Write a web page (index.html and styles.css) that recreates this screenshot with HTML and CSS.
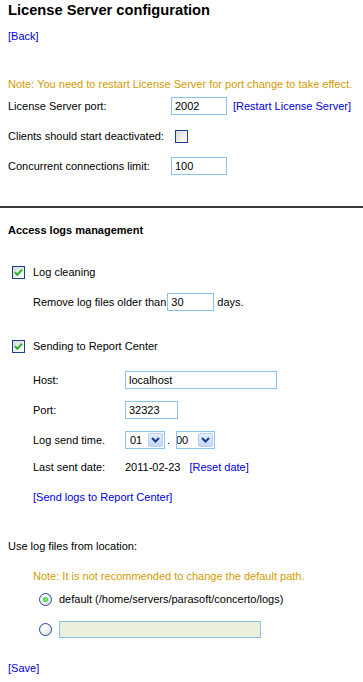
FILE: index.html
```html
<!DOCTYPE html>
<html>
<head>
<meta charset="utf-8">
<link rel="stylesheet" href="styles.css">
</head>
<body>
<div class="sect">
  <h1 class="title">License Server configuration</h1>
  <div class="back"><a class="link" href="#">[Back]</a></div>
  <div class="note note-top">Note: You need to restart License Server for port change to take effect.</div>
  <div class="row">
    <div class="lbl">License Server port:</div>
    <div class="field"><span class="input w-port">2002</span><a class="link restart" href="#">[Restart License Server]</a></div>
  </div>
  <div class="row">
    <div class="lbl">Clients should start deactivated:</div>
    <div class="field"><span class="cb cb-top"></span></div>
  </div>
  <div class="row">
    <div class="lbl">Concurrent connections limit:</div>
    <div class="field"><span class="input w-port">100</span></div>
  </div>
</div>
<div class="rule"></div>
<div class="sect">
  <div class="subhead">Access logs management</div>
  <div class="crow crow-first">
    <span class="cb checked"><svg width="11" height="11" viewBox="0 0 11 11"><path d="M2 5.2 L4.3 7.8 L9 2.6" fill="none" stroke="#22b022" stroke-width="2"/></svg></span>
    <span class="clabel">Log cleaning</span>
  </div>
  <div class="irow">
    <span>Remove log files older than</span><span class="input w-days">30</span><span>days.</span>
  </div>
  <div class="crow crow-second">
    <span class="cb checked"><svg width="11" height="11" viewBox="0 0 11 11"><path d="M2 5.2 L4.3 7.8 L9 2.6" fill="none" stroke="#22b022" stroke-width="2"/></svg></span>
    <span class="clabel">Sending to Report Center</span>
  </div>
  <div class="rc">
    <div class="rrow">
      <div class="rlbl">Host:</div>
      <span class="input w-host">localhost</span>
    </div>
    <div class="rrow">
      <div class="rlbl">Port:</div>
      <span class="input w-rport">32323</span>
    </div>
    <div class="rrow">
      <div class="rlbl">Log send time.</div>
      <span class="select s1"><span class="sval">01</span><span class="sbtn"><svg width="9" height="6" viewBox="0 0 9 6"><path d="M1 1 L4.5 4.5 L8 1" fill="none" stroke="#183b88" stroke-width="2"/></svg></span></span>
      <span class="dot">.</span>
      <span class="select s2"><span class="sval clip">00</span><span class="sbtn"><svg width="9" height="6" viewBox="0 0 9 6"><path d="M1 1 L4.5 4.5 L8 1" fill="none" stroke="#183b88" stroke-width="2"/></svg></span></span>
    </div>
    <div class="rrow rrow-last">
      <div class="rlbl">Last sent date:</div>
      <span>2011-02-23</span>
      <a class="link reset" href="#">[Reset date]</a>
    </div>
    <div class="sendlink"><a class="link" href="#">[Send logs to Report Center]</a></div>
  </div>
  <div class="uselog">Use log files from location:</div>
  <div class="note note-loc">Note: It is not recommended to change the default path.</div>
  <div class="radrow radrow-first">
    <span class="radio on"><span class="rdot"></span></span>
    <span class="rtext">default (/home/servers/parasoft/concerto/logs)</span>
  </div>
  <div class="radrow">
    <span class="radio"></span>
    <span class="input w-path"></span>
  </div>
  <div class="save"><a class="link" href="#">[Save]</a></div>
</div>
</body>
</html>
```

FILE: styles.css
```css
html, body {
  margin: 0;
  padding: 0;
  background: #ffffff;
}
body {
  font-family: "Liberation Sans", Arial, sans-serif;
  font-size: 11px;
  line-height: 13px;
  color: #000000;
}
.sect {
  padding: 0 8px;
}
.title {
  margin: 2px 0 0;
  font-size: 14.67px;
  line-height: 17px;
  font-weight: bold;
}
.link {
  color: #0000dd;
  text-decoration: none;
}
.back {
  margin-top: 11px;
}
.note {
  color: #d09c00;
}
.note-top {
  margin-top: 35px;
}
.row {
  display: flex;
  align-items: center;
  height: 30px;
}
.lbl {
  width: 163px;
  flex: none;
}
.field {
  display: flex;
  align-items: center;
}
.input {
  box-sizing: border-box;
  display: inline-flex;
  align-items: center;
  height: 18px;
  padding: 0 0 0 3px;
  border: 1px solid #8ac3e8;
  background: #ffffff;
  font-size: 11px;
}
.w-port { width: 56px; }
.w-days { width: 47px; margin: 0 3px 0 1px; }
.w-host { width: 152px; }
.w-rport { width: 53px; }
.w-path { width: 202px; height: 17px; background: #ecf0da; margin-left: 7px; }
.restart {
  margin-left: 6px;
}
.cb {
  box-sizing: border-box;
  width: 13px;
  height: 13px;
  border: 1px solid #1c3e94;
  background: linear-gradient(135deg, #d8d8d0 0%, #f4f4f0 70%, #ffffff 100%);
  display: inline-flex;
  align-items: center;
  justify-content: center;
  flex: none;
}
.cb-top {
  margin-left: 4px;
}
.rule {
  margin-top: 25px;
  height: 2px;
  background: #3a3a3a;
}
.subhead {
  margin-top: 16px;
  font-weight: bold;
}
.crow {
  display: flex;
  align-items: center;
  height: 30px;
  padding-left: 4px;
}
.crow-first { margin-top: 20px; }
.crow-second { margin-top: 14px; }
.clabel {
  margin-left: 8px;
}
.irow {
  display: flex;
  align-items: center;
  height: 30px;
  padding-left: 25px;
}
.rc {
  padding-left: 25px;
  margin-top: 4px;
}
.rrow {
  display: flex;
  align-items: center;
  height: 30px;
}
.rrow-last {
  height: 24px;
}
.rlbl {
  width: 92px;
  flex: none;
}
.select {
  box-sizing: border-box;
  display: inline-flex;
  align-items: center;
  height: 18px;
  border: 1px solid #8ac3e8;
  background: #ffffff;
  overflow: hidden;
}
.s1 { width: 40px; }
.s2 { width: 39px; }
.sval {
  flex: 1;
  padding-left: 4px;
  white-space: nowrap;
  overflow: hidden;
}
.sval.clip {
  padding-left: 1px;
  text-indent: -2px;
}
.sbtn {
  box-sizing: border-box;
  width: 15px;
  height: 14px;
  margin-right: 1px;
  border-radius: 2px;
  background: linear-gradient(180deg, #e2ecfd 0%, #c4d6f8 100%);
  border: 1px solid #b8cdf2;
  display: flex;
  align-items: center;
  justify-content: center;
}
.dot {
  width: 11px;
  padding-left: 2px;
  box-sizing: border-box;
}
.reset {
  margin-left: 9px;
}
.sendlink {
  margin-top: 12px;
}
.uselog {
  margin-top: 36px;
}
.note-loc {
  margin-top: 17px;
  padding-left: 25px;
}
.radrow {
  display: flex;
  align-items: center;
  height: 30px;
  padding-left: 31px;
}
.radrow-first {
  margin-top: 1px;
}
.radio {
  box-sizing: border-box;
  width: 13px;
  height: 13px;
  border-radius: 50%;
  border: 1px solid #1c4aa0;
  background: radial-gradient(circle at 35% 30%, #ffffff 0%, #f0f0ea 50%, #d4d4cc 100%);
  display: inline-flex;
  align-items: center;
  justify-content: center;
  flex: none;
}
.rdot {
  width: 5px;
  height: 5px;
  border-radius: 50%;
  background: radial-gradient(circle, #7ef07a 0%, #2cba2c 100%);
}
.rtext {
  margin-left: 7px;
}
.save {
  margin-top: 18px;
}
```
